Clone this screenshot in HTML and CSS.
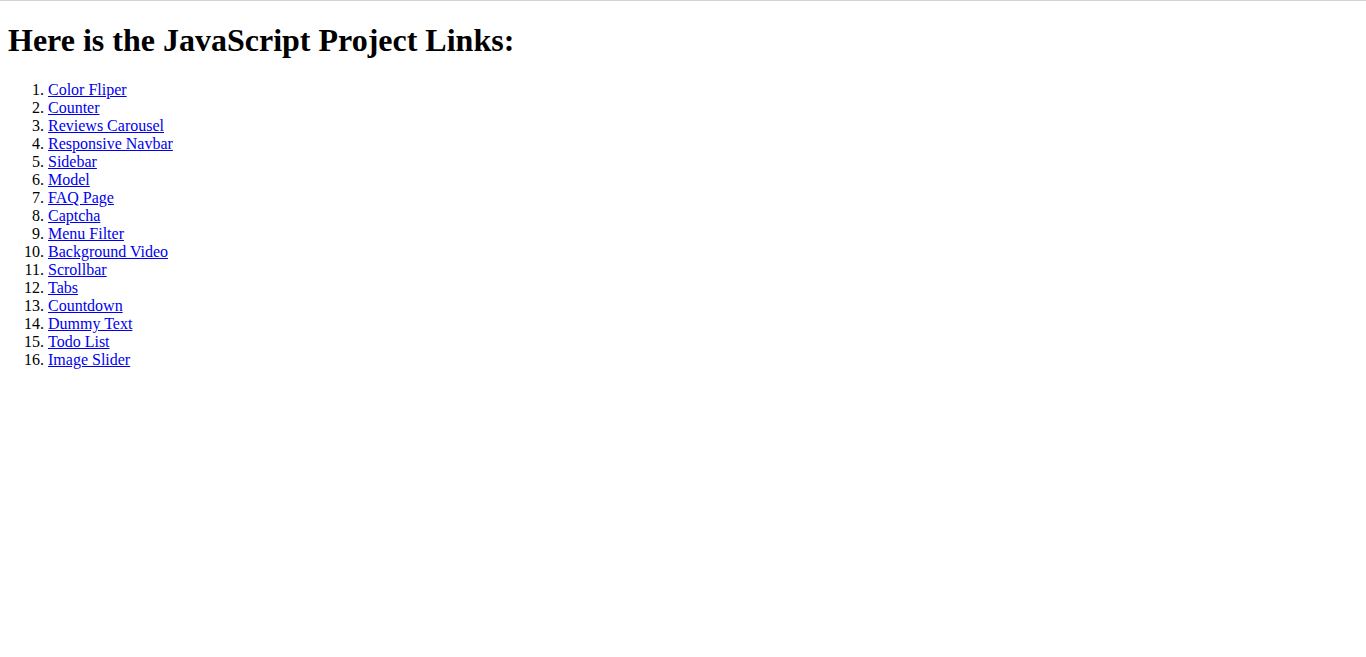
FILE: index.html
```html
<!DOCTYPE html>
<html>
<head>
<meta charset="utf-8">
<title>JavaScript Projects</title>
<link rel="stylesheet" href="styles.css">
</head>
<body>
<h1 class="title">Here is the JavaScript Project Links:</h1>
<ol class="projects">
<li><a href="#">Color Fliper</a></li>
<li><a href="#">Counter</a></li>
<li><a href="#">Reviews Carousel</a></li>
<li><a href="#">Responsive Navbar</a></li>
<li><a href="#">Sidebar</a></li>
<li><a href="#">Model</a></li>
<li><a href="#">FAQ Page</a></li>
<li><a href="#">Captcha</a></li>
<li><a href="#">Menu Filter</a></li>
<li><a href="#">Background Video</a></li>
<li><a href="#">Scrollbar</a></li>
<li><a href="#">Tabs</a></li>
<li><a href="#">Countdown</a></li>
<li><a href="#">Dummy Text</a></li>
<li><a href="#">Todo List</a></li>
<li><a href="#">Image Slider</a></li>
</ol>
</body>
</html>
```
FILE: styles.css
```css
html {
  border-top: 1px solid #d3d3d3;
}
body {
  margin: 8px;
  font-family: "Liberation Serif", "Times New Roman", serif;
  font-size: 16px;
  color: #000;
  background: #fff;
}
.title {
  font-size: 32px;
  font-weight: bold;
  margin: 13.44px 0 21.44px;
}
.projects {
  margin: 16px 0;
  padding-left: 40px;
}
.projects a {
  color: #0000ee;
  text-decoration: underline;
}
```
